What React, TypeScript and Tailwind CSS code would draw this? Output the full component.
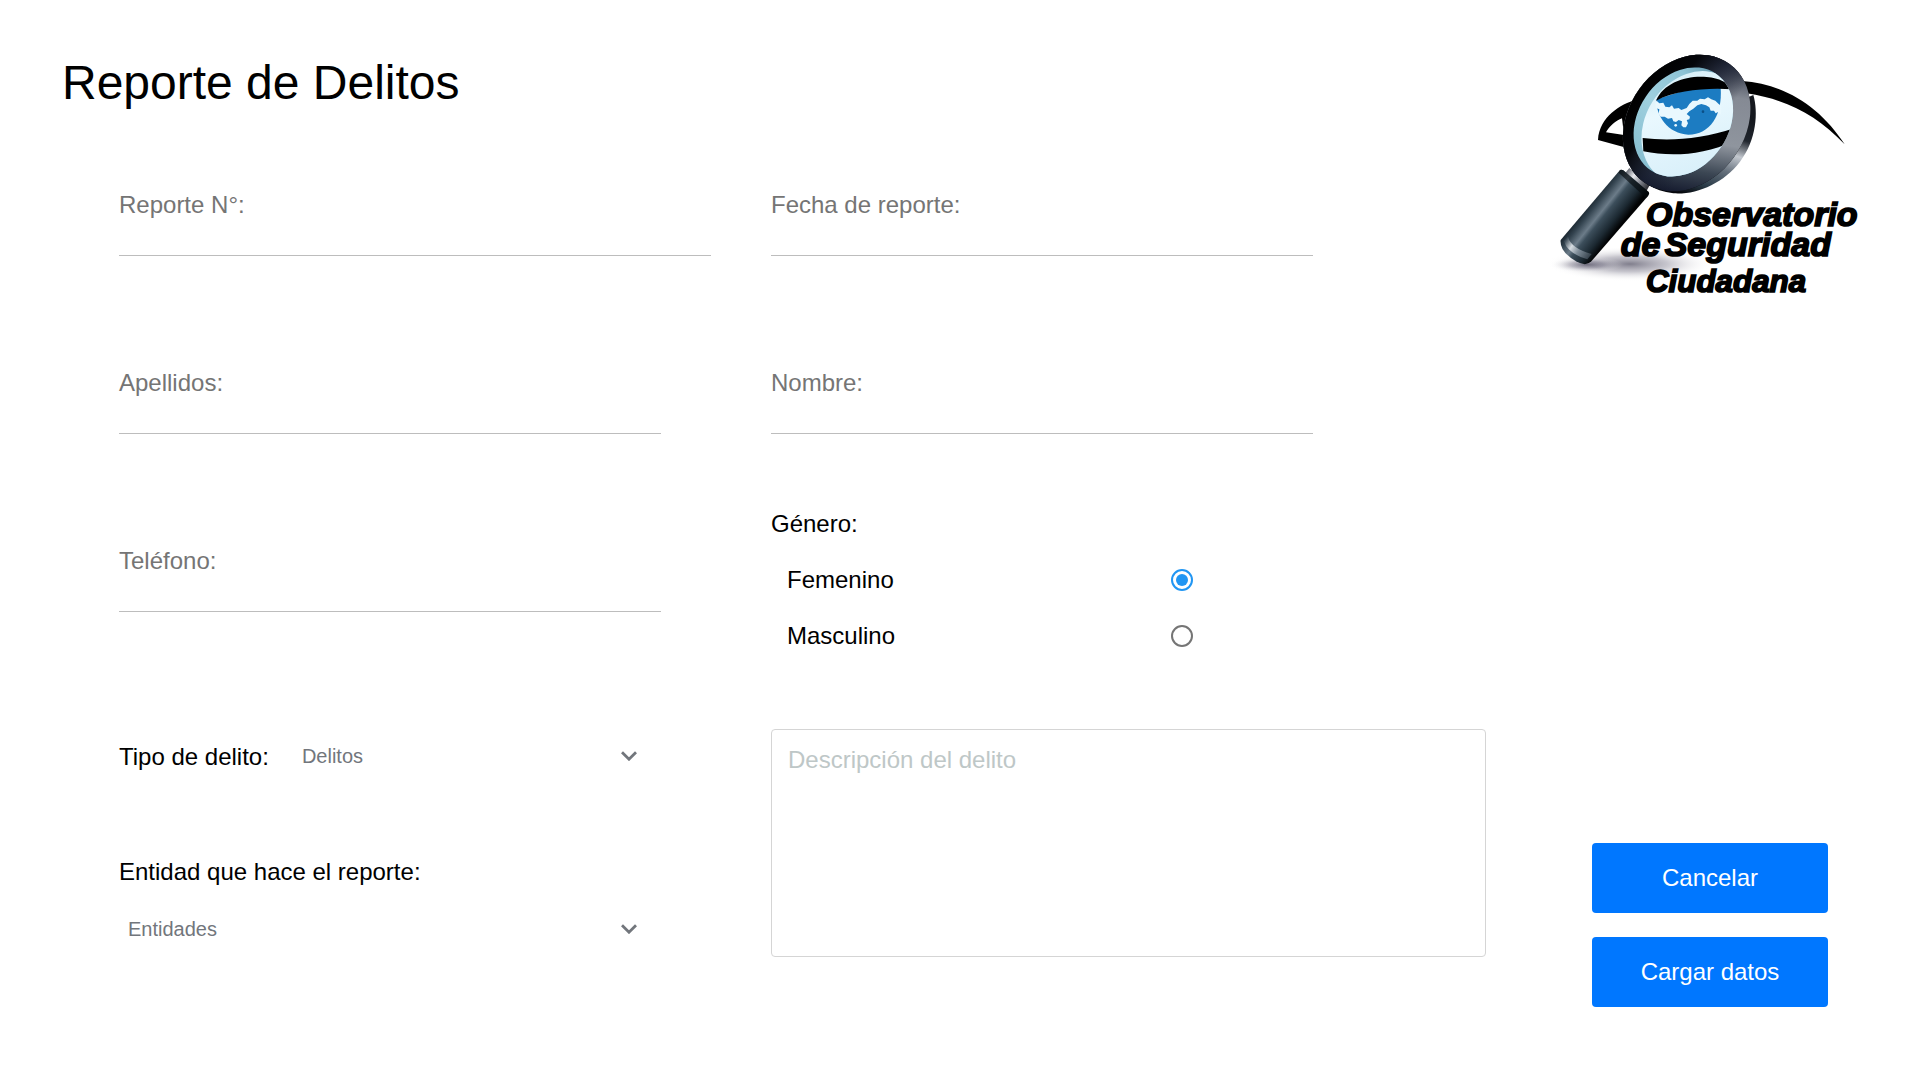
import { useState, type ReactNode } from 'react';

function Field({ id, label, type = 'text' }: { id: string; label: string; type?: string }) {
  return (
    <div className="flex flex-col">
      <label htmlFor={id} className="text-2xl leading-7 text-[#757575]">
        {label}
      </label>
      <input
        id={id}
        name={id}
        type={type}
        className="h-[37px] w-full border-b border-[#bdbdbd] bg-transparent text-2xl outline-none focus:border-[#2196f3]"
      />
    </div>
  );
}

function Select({ id, children }: { id: string; children: ReactNode }) {
  return (
    <div className="relative flex-1">
      <select
        id={id}
        name={id}
        className="h-10 w-full appearance-none bg-transparent pb-0.5 pl-[9px] pr-12 text-xl leading-6 text-[#72767c] outline-none"
      >
        {children}
      </select>
      <svg
        viewBox="0 0 16 10"
        aria-hidden="true"
        className="pointer-events-none absolute right-6 top-[14px] h-[10px] w-4"
      >
        <path d="M1 1.2 8 8.2 15 1.2" fill="none" stroke="#72767c" strokeWidth="2.8" />
      </svg>
    </div>
  );
}

function Radio({ label, checked, onChange }: { label: string; checked: boolean; onChange: () => void }) {
  return (
    <label className="flex max-w-[422px] items-center justify-between pl-4 text-2xl leading-7">
      {label}
      <input
        type="radio"
        name="genero"
        value={label}
        checked={checked}
        onChange={onChange}
        className="grid size-[22px] appearance-none place-items-center rounded-full border-2 border-[#757575] before:size-3 before:rounded-full checked:border-[#2196f3] checked:before:bg-[#2196f3]"
      />
    </label>
  );
}

function Logo() {
  return (
    <svg viewBox="0 0 1020 810" role="img" aria-label="Observatorio de Seguridad Ciudadana" className="w-full">
      <defs>
        <linearGradient id="rimFront" x1="0.25" y1="0" x2="0.65" y2="1">
          <stop offset="0" stopColor="#0c0f18" />
          <stop offset="0.1" stopColor="#353b4a" />
          <stop offset="0.3" stopColor="#858a94" />
          <stop offset="0.62" stopColor="#8f959e" />
          <stop offset="0.82" stopColor="#3c4754" />
          <stop offset="1" stopColor="#11162a" />
        </linearGradient>
        <linearGradient id="rimSide" x1="0.8" y1="0" x2="0.4" y2="1">
          <stop offset="0.15" stopColor="#15181e" />
          <stop offset="0.36" stopColor="#20252d" />
          <stop offset="0.52" stopColor="#c3c8cf" />
          <stop offset="0.68" stopColor="#66717d" />
          <stop offset="0.86" stopColor="#2b3c49" />
          <stop offset="1" stopColor="#05070b" />
        </linearGradient>
        <linearGradient id="rimDark" x1="0" y1="0" x2="1" y2="0">
          <stop offset="0" stopColor="#000" />
          <stop offset="0.25" stopColor="#05060a" />
          <stop offset="0.5" stopColor="#141a2c" stopOpacity="0.6" />
          <stop offset="0.72" stopColor="#111626" stopOpacity="0" />
        </linearGradient>
        <linearGradient id="lensEdge" x1="0" y1="1" x2="1" y2="0">
          <stop offset="0" stopColor="#7bb5c8" />
          <stop offset="0.45" stopColor="#9fd0df" />
          <stop offset="0.7" stopColor="#8ec4d6" />
          <stop offset="1" stopColor="#3e7086" />
        </linearGradient>
        <linearGradient id="lens" x1="0" y1="0" x2="1" y2="1">
          <stop offset="0" stopColor="#cdeaf4" />
          <stop offset="0.35" stopColor="#e9f8fe" />
          <stop offset="1" stopColor="#d2ecf8" />
        </linearGradient>
        <linearGradient id="handle" gradientUnits="userSpaceOnUse" x1="150" y1="490" x2="238" y2="560">
          <stop offset="0" stopColor="#1b2730" />
          <stop offset="0.15" stopColor="#33434f" />
          <stop offset="0.38" stopColor="#6c7c89" />
          <stop offset="0.5" stopColor="#3c4e5b" />
          <stop offset="0.78" stopColor="#1c2932" />
          <stop offset="1" stopColor="#020304" />
        </linearGradient>
        <linearGradient id="band" gradientUnits="userSpaceOnUse" x1="78" y1="600" x2="160" y2="655">
          <stop offset="0" stopColor="#3c4b57" />
          <stop offset="0.25" stopColor="#d7dde2" />
          <stop offset="0.5" stopColor="#7f8d99" />
          <stop offset="1" stopColor="#202b34" />
        </linearGradient>
        <linearGradient id="neck" gradientUnits="userSpaceOnUse" x1="258" y1="395" x2="330" y2="445">
          <stop offset="0" stopColor="#666a73" />
          <stop offset="0.3" stopColor="#e9eaee" />
          <stop offset="0.6" stopColor="#83868f" />
          <stop offset="1" stopColor="#1a1b20" />
        </linearGradient>
        <radialGradient id="shadow">
          <stop offset="0" stopColor="#2c2940" stopOpacity="0.6" />
          <stop offset="0.45" stopColor="#5f5c72" stopOpacity="0.35" />
          <stop offset="1" stopColor="#fff" stopOpacity="0" />
        </radialGradient>
        <clipPath id="lensClip">
          <ellipse cx="430" cy="246" rx="136" ry="175" transform="rotate(34 430 246)" />
        </clipPath>
      </defs>

      <ellipse cx="270" cy="672" rx="250" ry="52" fill="url(#shadow)" />
      <ellipse cx="140" cy="674" rx="110" ry="24" fill="url(#shadow)" />

      {/* eye outline on both sides of the lens */}
      <path
        fillRule="evenodd"
        d="M290 178C240 195 180 228 174 300L262 324 300 290ZM246 235C228 242 208 258 198 277L252 285Z"
        fill="#000"
      />
      <path d="M606 123C730 130 842 200 914 313C830 225 745 180 620 160Z" fill="#000" />

      {/* handle */}
      <path d="M268 384 332 430 316 460 250 406Z" fill="url(#neck)" />
      <path d="M240 390Q246 388 250 391L326 456Q329 461 324 468L154 664Q138 681 108 664Q58 634 62 600Z" fill="url(#handle)" />
      <path d="M84 590Q92 624 155 642L142 658Q82 640 72 604Z" fill="url(#band)" />
      <path d="M240 390Q246 388 250 391L326 456Q329 461 324 468L318 474 236 398Z" fill="#060a0e" opacity="0.65" />

      {/* ring */}
      <g>
        <path
          d="M640 165C655 215 650 300 600 365C550 430 470 465 400 460C340 452 300 425 275 390L440 250Z"
          fill="url(#rimSide)"
        />
        <ellipse cx="440" cy="249" rx="175" ry="219" transform="rotate(36 440 249)" fill="#05060a" />
      </g>
      <ellipse cx="440" cy="249" rx="175" ry="219" transform="rotate(36 440 249)" fill="url(#rimFront)" />
      <ellipse cx="440" cy="249" rx="175" ry="219" transform="rotate(36 440 249)" fill="url(#rimDark)" />

      {/* lens */}
      <g clipPath="url(#lensClip)">
        <rect x="250" y="60" width="360" height="370" fill="url(#lensEdge)" />
        <ellipse cx="458" cy="262" rx="143" ry="178" transform="rotate(32 458 262)" fill="url(#lens)" />
        <path d="M350 178C345 225 385 283 445 284C510 284 548 225 542 144L450 146Z" fill="#1c7cc2" />
        <path
          d="M346 190L350 182 358 190 370 188 376 200 388 202 396 196 402 206 416 204 424 210 440 204 448 192 458 182 472 182 480 176 494 178 504 172 514 178 526 182 536 192 544 198 543 224 534 216 527 220 522 212 512 212 508 202 498 196 484 192 472 196 460 206 448 214 440 222 450 230 448 238 440 240 444 250 438 262 430 262 424 256 426 244 416 240 408 246 400 244 396 234 384 236 374 230 362 230 356 222 358 208 348 204Z"
          fill="#e9f8fe"
        />
        <circle cx="489" cy="215" r="4" fill="#0b4f86" />
        <circle cx="407" cy="256" r="4" fill="#e9f8fe" />
        <path d="M348 182C372 128 438 106 500 111C540 115 560 126 578 148C500 143 410 150 348 182Z" fill="#000" />
        <path d="M308 294C390 304 490 298 590 262L588 300C490 348 390 350 310 334Z" fill="#000" />
      </g>

      <g
        fontFamily="'Liberation Sans', Arial, sans-serif"
        fontWeight="bold"
        fontStyle="italic"
        fill="#000"
        stroke="#000"
        strokeWidth="5"
      >
        <text x="318" y="557" fontSize="102">Observatorio</text>
        <text y="647" fontSize="102">
          <tspan x="242">de</tspan>
          <tspan x="374">Seguridad</tspan>
        </text>
        <text x="318" y="755" fontSize="94">Ciudadana</text>
      </g>
    </svg>
  );
}

const buttonClass =
  'h-[70px] w-full rounded bg-[#0077ff] text-2xl text-white hover:bg-[#0069e0]';

export default function App() {
  const [genero, setGenero] = useState('Femenino');

  return (
    <form
      onSubmit={(e) => e.preventDefault()}
      className="flex min-h-screen justify-between gap-[54px] bg-white pr-10 font-['Liberation_Sans',Arial,sans-serif] text-black"
    >
      <main className="flex-1 pt-[55px] pb-10">
        <h1 className="pl-[62px] text-5xl leading-14">Reporte de Delitos</h1>

        <div className="mt-20 grid grid-cols-[592fr_715fr] gap-[60px] pl-[119px]">
          <div>
            <Field id="reporte" label="Reporte N°:" />
            <div className="pr-[50px]">
              <div className="mt-[113px]">
                <Field id="apellidos" label="Apellidos:" />
              </div>
              <div className="mt-[113px]">
                <Field id="telefono" label="Teléfono:" type="tel" />
              </div>
              <div className="mt-[125px] flex items-center gap-6">
                <label htmlFor="delito" className="text-2xl leading-7">
                  Tipo de delito:
                </label>
                <Select id="delito">
                  <option>Delitos</option>
                </Select>
              </div>
              <div className="mt-[81px] flex flex-col gap-6">
                <label htmlFor="entidad" className="text-2xl leading-7">
                  Entidad que hace el reporte:
                </label>
                <Select id="entidad">
                  <option>Entidades</option>
                </Select>
              </div>
            </div>
          </div>

          <div>
            <div className="pr-[173px]">
              <Field id="fecha" label="Fecha de reporte:" />
              <div className="mt-[113px]">
                <Field id="nombre" label="Nombre:" />
              </div>
            </div>
            <fieldset className="mt-[76px]">
              <legend className="text-2xl leading-7">Género:</legend>
              <div className="mt-7 flex flex-col gap-7">
                {['Femenino', 'Masculino'].map((g) => (
                  <Radio key={g} label={g} checked={genero === g} onChange={() => setGenero(g)} />
                ))}
              </div>
            </fieldset>
            <textarea
              aria-label="Descripción del delito"
              placeholder="Descripción del delito"
              className="mt-[79px] block h-[228px] w-full resize-none rounded border border-[#d5d5d5] p-4 text-2xl leading-7 outline-none placeholder:text-[#bec7c7]"
            />
          </div>
        </div>
      </main>

      <aside className="flex w-[340px] flex-col justify-between pt-10 pb-[73px]">
        <Logo />
        <div className="flex flex-col gap-6 px-[52px]">
          <button type="button" className={buttonClass}>
            Cancelar
          </button>
          <button type="submit" className={buttonClass}>
            Cargar datos
          </button>
        </div>
      </aside>
    </form>
  );
}
